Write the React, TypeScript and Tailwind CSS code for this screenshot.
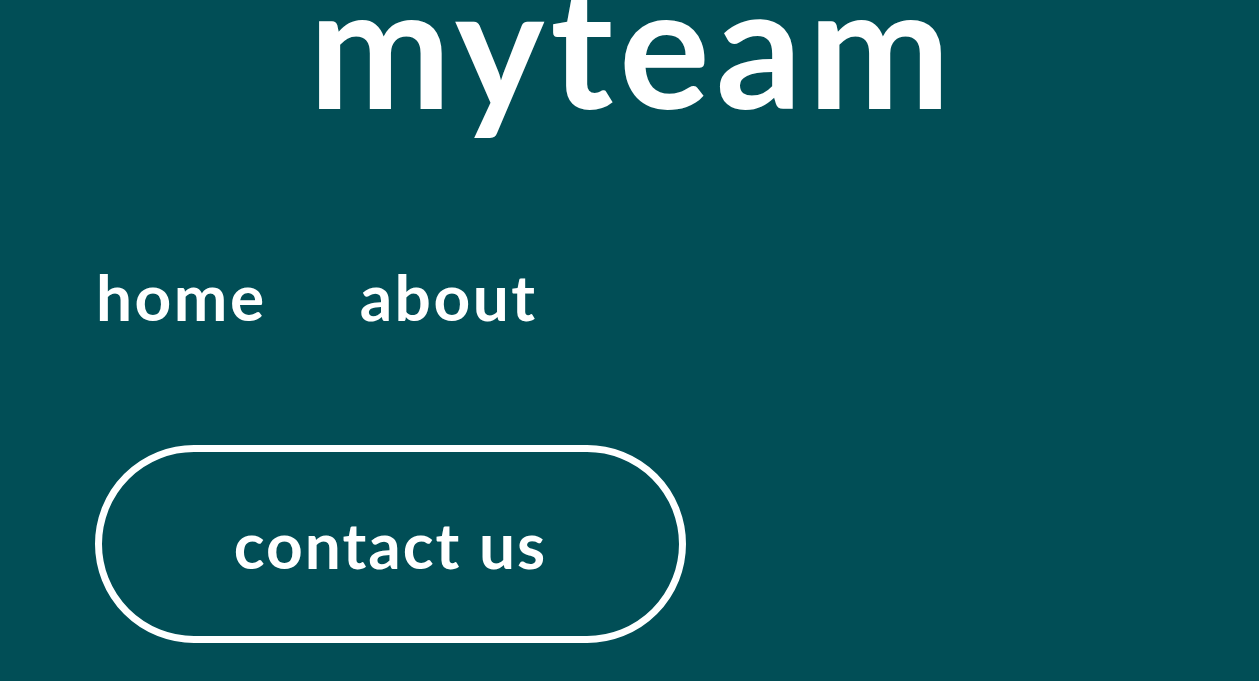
import React from "react";

export default function App() {
  return (
    <div
      className="w-full h-[681px] overflow-hidden bg-[#014E56] text-white flex flex-col"
      style={{ fontFamily: "Lato, 'Open Sans', sans-serif" }}
    >
      <div className="flex justify-center mt-[-42px] pl-[6px]">
        <span className="text-[170px] font-bold leading-none tracking-[6px]">myteam</span>
      </div>
      <nav className="flex items-center gap-[93px] pl-[96px] mt-[137px]">
        <a className="text-[64px] font-bold leading-none tracking-[2.5px]">home</a>
        <a className="text-[64px] font-bold leading-none tracking-[2.5px]">about</a>
      </nav>
      <div className="pl-[95px] mt-[116px]">
        <button className="w-[591px] h-[198px] rounded-full border-[7px] border-white flex items-center justify-center text-[64px] font-bold leading-none tracking-[2px] pt-[2px]">
          contact us
        </button>
      </div>
    </div>
  );
}
